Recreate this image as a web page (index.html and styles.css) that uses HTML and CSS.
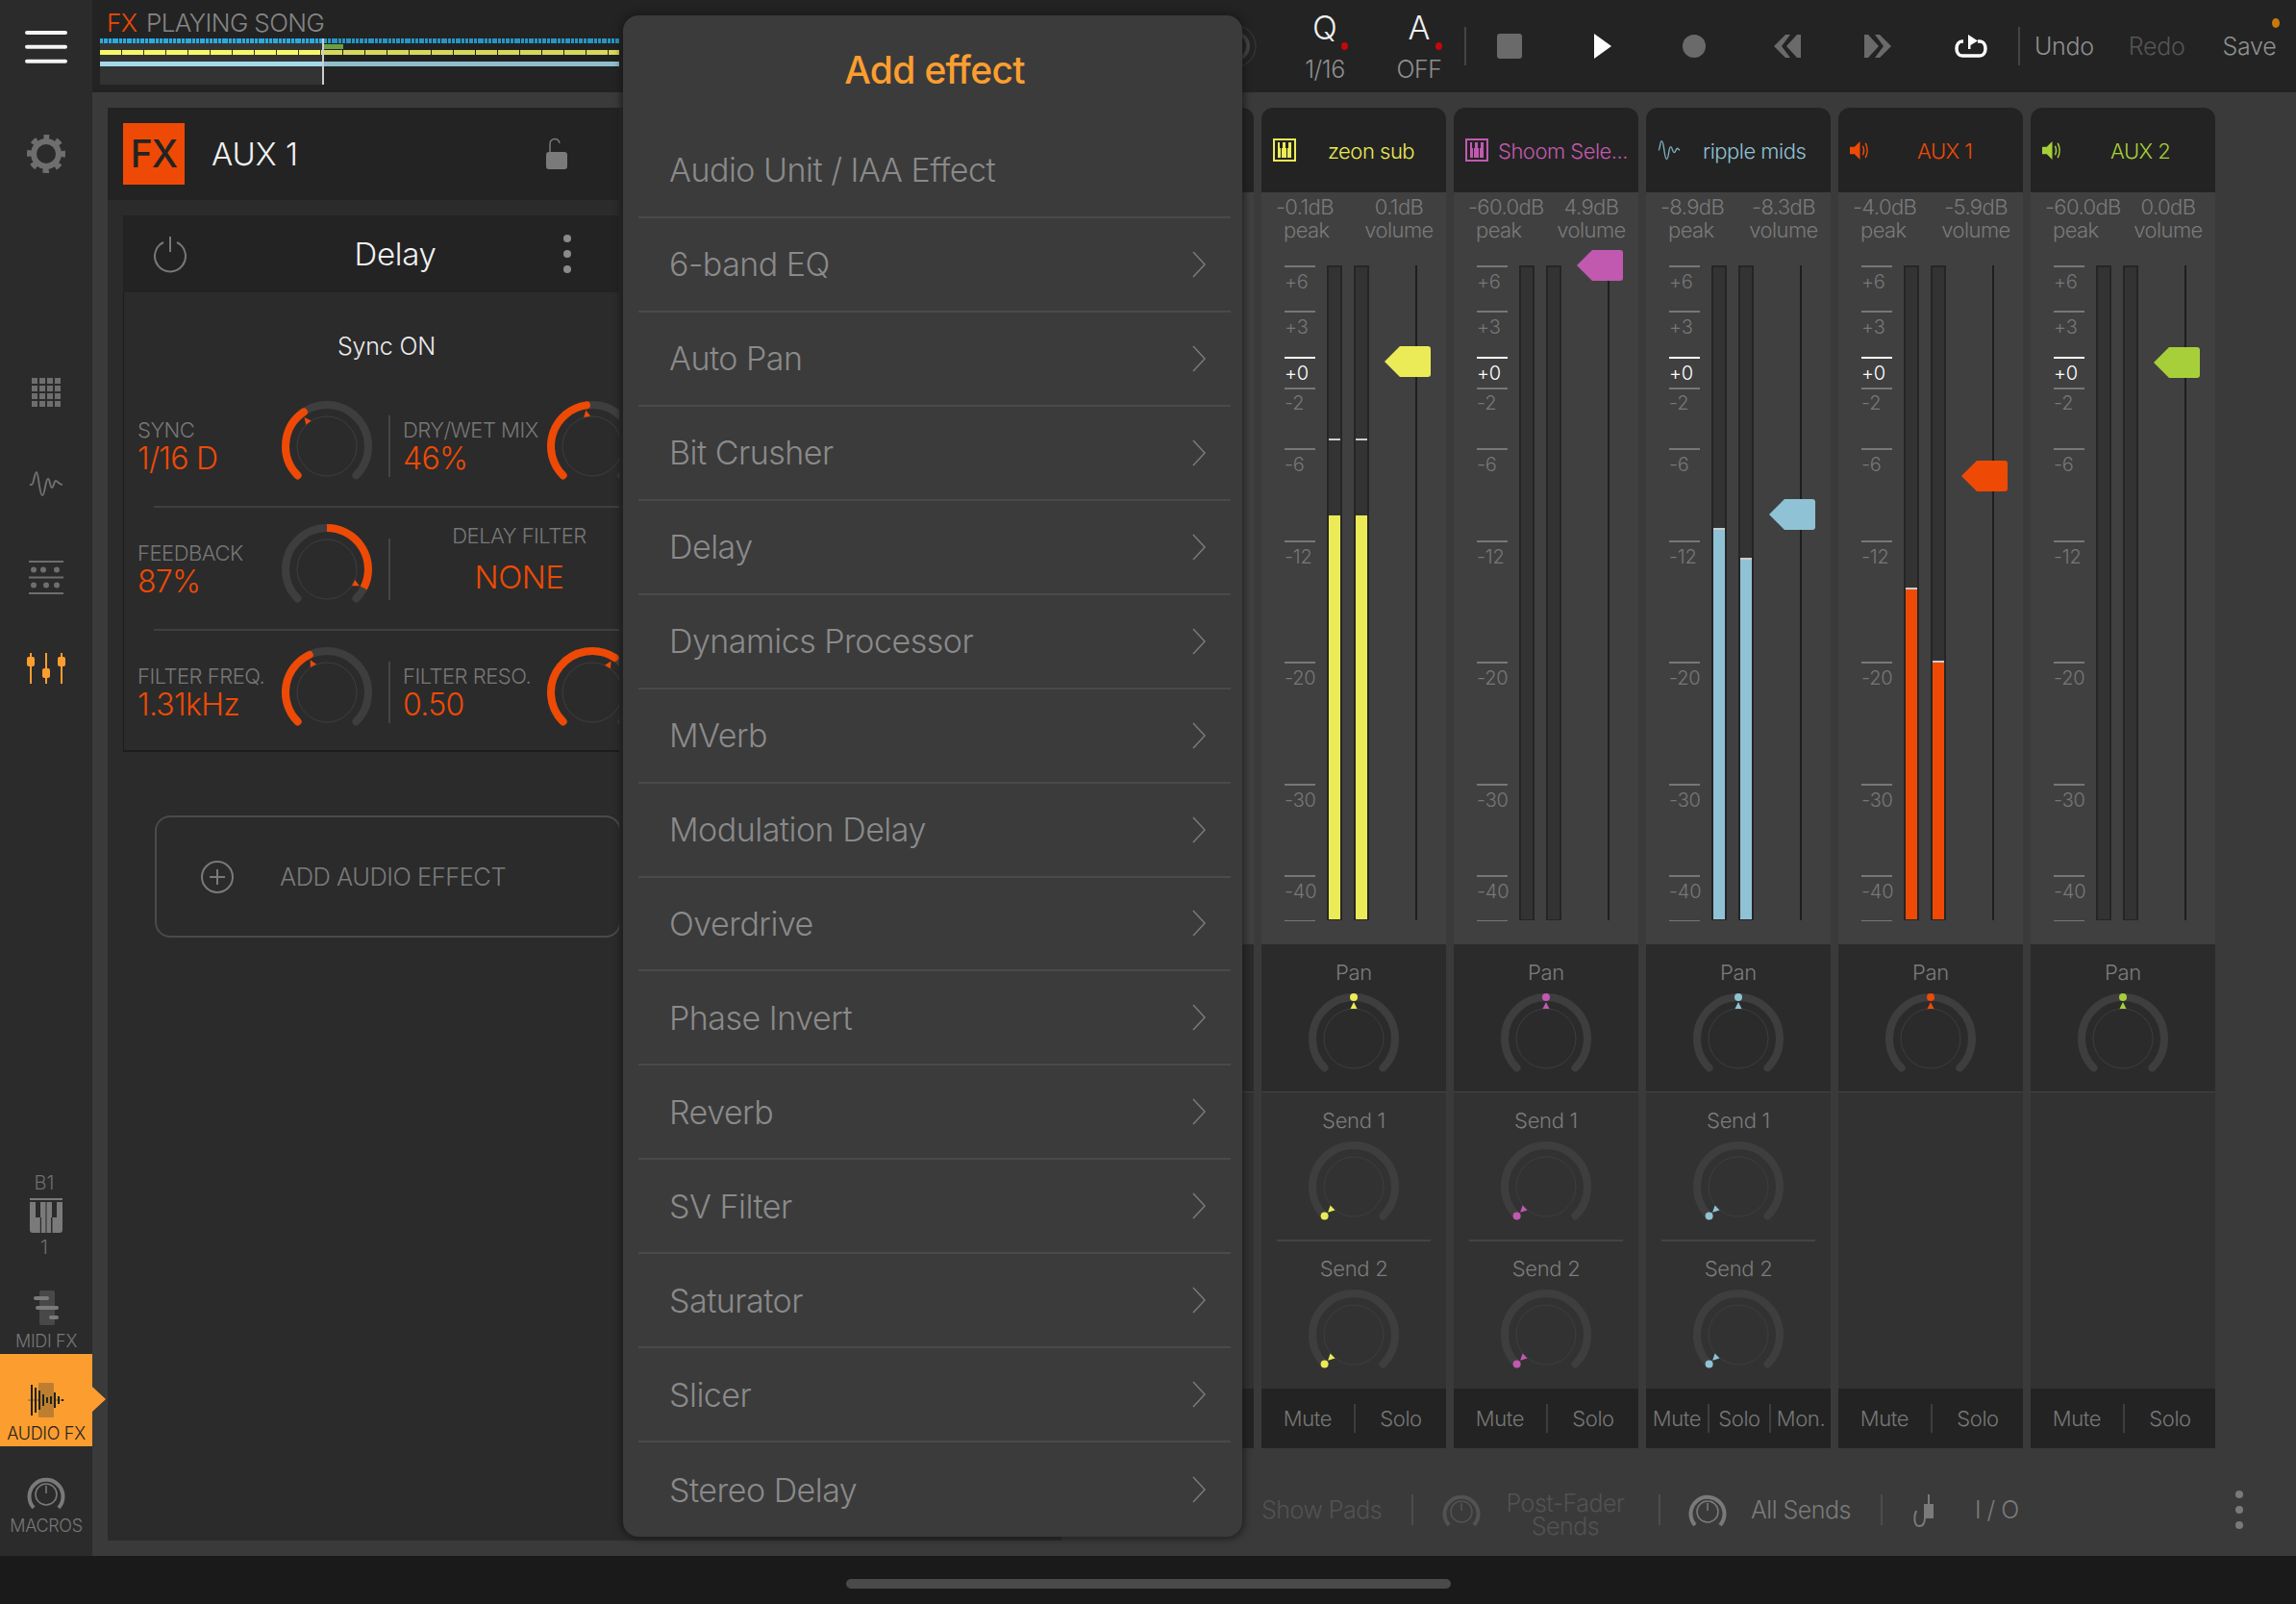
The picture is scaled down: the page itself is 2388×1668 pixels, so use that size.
FILE: index.html
```html
<!DOCTYPE html>
<html lang="en">
<head>
<meta charset="utf-8">
<title>AUX 1 - Add effect</title>
<link rel="stylesheet" href="styles.css">
</head>
<body>
<svg class="defs" aria-hidden="true">
  <symbol id="knob-base" viewBox="0 0 94 94" overflow="visible">
    <path class="knob-track" d="M16.6 77.4A43 43 0 1 1 77.4 77.4"/>
    <circle class="knob-inner" cx="47" cy="47" r="31"/>
  </symbol>
  <symbol id="ring" viewBox="0 0 38 34" overflow="visible">
    <path fill="none" stroke="currentColor" stroke-width="4" stroke-linecap="butt" d="M6 32A17.5 17.5 0 1 1 32 32"/>
    <circle cx="19" cy="18" r="11" fill="none" stroke="currentColor" stroke-width="1.6"/>
    <path stroke="currentColor" stroke-width="1.6" d="M19 9V17"/>
  </symbol>
  <symbol id="pad" viewBox="0 0 24 24">
    <rect x="1" y="1" width="22" height="22" fill="none" stroke="currentColor" stroke-width="2"/>
    <path fill="currentColor" d="M5 4H7V10H8V20H5ZM9 20V10H10V4H11V4H13V10H14V20ZM15 20V10H16V4H18V4H19V20Z"/>
  </symbol>
  <symbol id="speaker" viewBox="0 0 22 22">
    <path fill="currentColor" d="M0 7H5L11 1V21L5 15H0Z"/>
    <path fill="none" stroke="currentColor" stroke-width="1.6" d="M14 6Q16.5 11 14 16M17 3Q21 11 17 19"/>
  </symbol>
</svg>

<div class="app">
  <div class="upper">
    <nav class="sidebar">
      <div class="nav-top">
        <svg class="ic-menu" viewBox="0 0 44 36"><path d="M2 4H42M2 18.7H42M2 33.7H42"/></svg>
        <svg class="ic-gear" viewBox="0 0 40 40"><circle class="gear-ring" cx="20" cy="20" r="13"/><circle class="gear-teeth" cx="20" cy="20" r="17.5"/></svg>
        <svg class="ic-grid" viewBox="0 0 30 30"><path d="M0 0h6v6H0zM8 0h6v6H8zM16 0h6v6h-6zM24 0h6v6h-6zM0 8h6v6H0zM8 8h6v6H8zM16 8h6v6h-6zM24 8h6v6h-6zM0 16h6v6H0zM8 16h6v6H8zM16 16h6v6h-6zM24 16h6v6h-6zM0 24h6v6H0zM8 24h6v6H8zM16 24h6v6h-6zM24 24h6v6h-6z"/></svg>
        <svg class="ic-wave" viewBox="0 0 36 28"><path d="M1 15H3C5 15 6 2 8 2C10 2 11 26 14 26C17 26 17 9 20 9C22 9 22 18 24 18C26 18 26 11 28 11C30 11 31 15 35 15"/></svg>
        <svg class="ic-steps" viewBox="0 0 36 36"><path class="steps-line" d="M0 1H36M0 17.5H36M0 34H36"/><circle cx="5" cy="9.5" r="3"/><circle cx="15" cy="9.5" r="3"/><circle cx="29" cy="9.5" r="3"/><circle cx="5" cy="25.500" r="3"/><circle cx="18" cy="25.500" r="3"/><circle cx="29" cy="25.500" r="3"/></svg>
        <svg class="ic-faders" viewBox="0 0 40 32"><path class="fader-line" d="M4 0V32M20 0V32M36 0V32"/><rect x="0" y="4" width="8" height="10" rx="2"/><rect x="16" y="16" width="8" height="10" rx="2"/><rect x="32" y="4" width="8" height="10" rx="2"/></svg>
      </div>
      <div class="nav-bottom">
        <div class="nav-key">B1</div>
        <svg class="ic-piano" viewBox="0 0 34 36"><path class="piano-top" d="M0 0H34V2H0Z"/><path class="piano-keys" d="M0 4H34V33A3 3 0 0 1 31 36H3A3 3 0 0 1 0 33Z"/><path class="piano-black" d="M6 4H11V20H12V36H10.800V20H6ZM16.500 4H17.500V36H16.500ZM18 4H18ZM22 36V20H23V4H28V20H23.500V36Z"/></svg>
        <div class="nav-key nav-key-num">1</div>
        <svg class="ic-midi" viewBox="0 0 26 36"><rect class="midi-back" x="6" y="0" width="16" height="36" rx="2"/><rect class="midi-bar" x="0" y="6" width="16" height="4" rx="2"/><rect class="midi-bar" x="2" y="16" width="24" height="4" rx="2"/><rect class="midi-bar" x="16" y="26" width="10" height="4" rx="2"/></svg>
        <div class="nav-label">MIDI FX</div>
        <div class="nav-active">
          <svg class="ic-audio" viewBox="0 0 38 36"><rect class="audio-back" x="11" y="0" width="16" height="36" rx="1"/><rect class="audio-back" x="0" y="17" width="38" height="2"/><path class="audio-bars" d="M4 2V34M8 5V31M12 8V28M16 12V24M20 15V21M24 14V22M28 10V26M32 14V22M36 17V19"/></svg>
          <div class="nav-label nav-label-active">AUDIO FX</div>
        </div>
        <svg class="ic-macros"><use href="#ring"/></svg>
        <div class="nav-label">MACROS</div>
      </div>
    </nav>

    <div class="main">
      <header class="topbar">
        <div class="song">
          <div class="song-title"><span class="song-fx">FX</span> PLAYING SONG</div>
          <div class="timeline">
            <div class="tl-blue"></div>
            <div class="tl-yellow"></div>
            <div class="tl-light"></div>
            <div class="tl-green"></div>
            <div class="tl-dim"></div>
            <div class="tl-head"></div>
          </div>
        </div>
        <svg class="tempo" viewBox="0 0 48 48"><circle class="tempo-outer" cx="24" cy="24" r="22"/><circle class="tempo-inner" cx="24" cy="24" r="14"/></svg>
        <div class="toggle toggle-q"><span class="toggle-key">Q</span><i class="toggle-dot"></i><span class="toggle-val">1/16</span></div>
        <div class="toggle toggle-a"><span class="toggle-key">A</span><i class="toggle-dot"></i><span class="toggle-val">OFF</span></div>
        <i class="vbar"></i>
        <div class="transport">
          <div class="tbtn"><svg class="ic-stop" viewBox="0 0 26 26"><rect width="26" height="26" rx="3"/></svg></div>
          <div class="tbtn"><svg class="ic-play" viewBox="0 0 18 26"><path d="M0 0L18 13L0 26Z"/></svg></div>
          <div class="tbtn"><svg class="ic-rec" viewBox="0 0 24 24"><circle cx="12" cy="12" r="12"/></svg></div>
          <div class="tbtn"><svg class="ic-skip" viewBox="0 0 32 24"><path d="M15 0H20L11 12L20 24H15L3 12ZM27 0H31V24H27L16 12Z"/></svg></div>
          <div class="tbtn"><svg class="ic-skip" viewBox="0 0 32 24"><path d="M17 0H12L21 12L12 24H17L29 12ZM5 0H1V24H5L16 12Z"/></svg></div>
          <div class="tbtn"><svg class="ic-loop" viewBox="0 0 34 24"><path class="loop-line" d="M9 7H8C4.500 7 2 10 2 14.500C2 19 4.500 22 8 22H26C29.500 22 32 19 32 14.500C32 10 29.500 7 26 7H24"/><path class="loop-head" d="M14 0L24 6.500L16.500 11V15H14Z"/></svg></div>
        </div>
        <i class="vbar vbar-end"></i>
        <div class="actions">
          <span class="action">Undo</span>
          <span class="action action-off">Redo</span>
          <span class="action action-save">Save<i class="save-dot"></i></span>
        </div>
      </header>

      <div class="workspace">
        <section class="editor">
          <div class="editor-clip">
            <div class="track-head">
              <div class="fx-badge">FX</div>
              <div class="track-name">AUX 1</div>
              <svg class="ic-lock" viewBox="0 0 22 32"><path class="lock-arc" d="M4 15V6A5 5 0 0 1 14 5"/><rect y="14" width="22" height="18" rx="3"/></svg>
            </div>
            <div class="device">
              <div class="device-head">
                <svg class="ic-power" viewBox="0 0 34 36"><path d="M10 6A16 16 0 1 0 24 6M17 0V16"/></svg>
                <div class="device-name">Delay</div>
                <svg class="ic-more" viewBox="0 0 8 40"><circle cx="4" cy="4" r="4"/><circle cx="4" cy="20" r="4"/><circle cx="4" cy="36" r="4"/></svg>
              </div>
              <div class="device-body">
                <div class="sync">Sync ON</div>
                <div class="row">
                  <div class="param"><div class="param-name">SYNC</div><div class="param-val">1/16 D</div></div>
                  <svg class="knob dev-knob" viewBox="0 0 94 94"><use href="#knob-base"/><path class="knob-arc" d="M16.6 77.4A43 43 0 0 1 23 11.400"/><polygon class="knob-ptr" points="47,9 43.500,16 50.500,16" transform="rotate(-38 47 47)"/></svg>
                  <i class="row-bar"></i>
                  <div class="param"><div class="param-name">DRY/WET MIX</div><div class="param-val">46%</div></div>
                  <svg class="knob dev-knob" viewBox="0 0 94 94"><use href="#knob-base"/><path class="knob-arc" d="M16.6 77.4A43 43 0 0 1 41 4.400"/><polygon class="knob-ptr" points="47,9 43.500,16 50.500,16" transform="rotate(-10 47 47)"/></svg>
                </div>
                <div class="row-rule"></div>
                <div class="row">
                  <div class="param"><div class="param-name">FEEDBACK</div><div class="param-val">87%</div></div>
                  <svg class="knob dev-knob" viewBox="0 0 94 94"><use href="#knob-base"/><path class="knob-arc knob-arc-butt" d="M47 4A43 43 0 0 1 85.300 66.500"/><polygon class="knob-ptr" points="47,9 43.500,16 50.500,16" transform="rotate(117 47 47)"/></svg>
                  <i class="row-bar"></i>
                  <div class="param-select"><div class="param-name">DELAY FILTER</div><div class="select-val">NONE</div></div>
                </div>
                <div class="row-rule"></div>
                <div class="row">
                  <div class="param"><div class="param-name">FILTER FREQ.</div><div class="param-val">1.31kHz</div></div>
                  <svg class="knob dev-knob" viewBox="0 0 94 94"><use href="#knob-base"/><path class="knob-arc" d="M16.6 77.4A43 43 0 0 1 28.800 8"/><polygon class="knob-ptr" points="47,9 43.500,16 50.500,16" transform="rotate(-27 47 47)"/></svg>
                  <i class="row-bar"></i>
                  <div class="param"><div class="param-name">FILTER RESO.</div><div class="param-val">0.50</div></div>
                  <svg class="knob dev-knob" viewBox="0 0 94 94"><use href="#knob-base"/><path class="knob-arc" d="M16.6 77.4A43 43 0 0 1 70.400 10.900"/><polygon class="knob-ptr" points="47,9 43.500,16 50.500,16" transform="rotate(31 47 47)"/></svg>
                </div>
              </div>
            </div>
            <div class="add-box">
              <svg class="ic-plus" viewBox="0 0 34 34"><circle cx="17" cy="17" r="16"/><path d="M17 9V25M9 17H25"/></svg>
              <span class="add-text">ADD AUDIO EFFECT</span>
            </div>
          </div>
        </section>

        <section class="mixer">
          <div class="strips">
            <div class="strip strip-ghost">
              <div class="strip-head"></div>
              <div class="strip-levels"></div>
              <div class="strip-pan"></div>
              <div class="strip-sends"></div>
              <div class="strip-mutes"></div>
            </div>

            <div class="strip c-yellow">
              <div class="strip-head">
                <svg class="head-ic"><use href="#pad"/></svg>
                <span class="strip-name name-zeon">zeon sub</span>
              </div>
              <div class="strip-levels">
                <div class="readouts">
                  <div class="ro-left"><div class="ro-val">-0.1dB</div><div class="ro-lab">peak</div></div>
                  <div class="ro-right"><div>0.1dB</div><div>volume</div></div>
                </div>
                <div class="meters">
                  <div class="scale"><div class="tick">+6</div><div class="tick">+3</div><div class="tick tick-zero">+0</div><div class="tick">-2</div><div class="tick">-6</div><div class="tick">-12</div><div class="tick">-20</div><div class="tick">-30</div><div class="tick">-40</div><div class="tick tick-end"></div></div>
                  <div class="meter"><i class="peak" style="top:178px"></i><div class="fill" style="height:420px"></div></div>
                  <div class="meter"><i class="peak" style="top:178px"></i><div class="fill" style="height:420px"></div></div>
                  <i class="fader-rail"></i>
                  <svg class="handle" style="top:84px" viewBox="0 0 48 32"><path d="M0 16L16 0H45A3 3 0 0 1 48 3V29A3 3 0 0 1 45 32H16Z"/></svg>
                </div>
              </div>
              <div class="strip-pan">
                <div class="knob-label">Pan</div>
                <svg class="knob" viewBox="0 0 94 94"><use href="#knob-base"/><circle class="knob-dot" cx="47" cy="4" r="4"/><polygon class="knob-mark" points="47,9 43.500,16 50.500,16"/></svg>
              </div>
              <div class="strip-sends">
                <div class="knob-label">Send 1</div>
                <svg class="knob" viewBox="0 0 94 94"><use href="#knob-base"/><circle class="knob-dot" cx="16.600" cy="77.400" r="4"/><polygon class="knob-mark" points="47,9 43.500,16 50.500,16" transform="rotate(-135 47 47)"/></svg>
                <div class="send-rule"></div>
                <div class="knob-label">Send 2</div>
                <svg class="knob" viewBox="0 0 94 94"><use href="#knob-base"/><circle class="knob-dot" cx="16.600" cy="77.400" r="4"/><polygon class="knob-mark" points="47,9 43.500,16 50.500,16" transform="rotate(-135 47 47)"/></svg>
              </div>
              <div class="strip-mutes"><span>Mute</span><span>Solo</span></div>
            </div>

            <div class="strip c-pink">
              <div class="strip-head">
                <svg class="head-ic"><use href="#pad"/></svg>
                <span class="strip-name name-shoom">Shoom Sele...</span>
              </div>
              <div class="strip-levels">
                <div class="readouts">
                  <div class="ro-left"><div class="ro-val">-60.0dB</div><div class="ro-lab">peak</div></div>
                  <div class="ro-right"><div>4.9dB</div><div>volume</div></div>
                </div>
                <div class="meters">
                  <div class="scale"><div class="tick">+6</div><div class="tick">+3</div><div class="tick tick-zero">+0</div><div class="tick">-2</div><div class="tick">-6</div><div class="tick">-12</div><div class="tick">-20</div><div class="tick">-30</div><div class="tick">-40</div><div class="tick tick-end"></div></div>
                  <div class="meter"></div>
                  <div class="meter"></div>
                  <i class="fader-rail"></i>
                  <svg class="handle" style="top:-16px" viewBox="0 0 48 32"><path d="M0 16L16 0H45A3 3 0 0 1 48 3V29A3 3 0 0 1 45 32H16Z"/></svg>
                </div>
              </div>
              <div class="strip-pan">
                <div class="knob-label">Pan</div>
                <svg class="knob" viewBox="0 0 94 94"><use href="#knob-base"/><circle class="knob-dot" cx="47" cy="4" r="4"/><polygon class="knob-mark" points="47,9 43.500,16 50.500,16"/></svg>
              </div>
              <div class="strip-sends">
                <div class="knob-label">Send 1</div>
                <svg class="knob" viewBox="0 0 94 94"><use href="#knob-base"/><circle class="knob-dot" cx="16.600" cy="77.400" r="4"/><polygon class="knob-mark" points="47,9 43.500,16 50.500,16" transform="rotate(-135 47 47)"/></svg>
                <div class="send-rule"></div>
                <div class="knob-label">Send 2</div>
                <svg class="knob" viewBox="0 0 94 94"><use href="#knob-base"/><circle class="knob-dot" cx="16.600" cy="77.400" r="4"/><polygon class="knob-mark" points="47,9 43.500,16 50.500,16" transform="rotate(-135 47 47)"/></svg>
              </div>
              <div class="strip-mutes"><span>Mute</span><span>Solo</span></div>
            </div>

            <div class="strip c-blue">
              <div class="strip-head">
                <svg class="head-ic head-wave" viewBox="0 0 28 24"><path d="M1 12C3 12 3 1 5 1C8 1 8 23 11 23C14 23 13 8 16 8C18 8 18 15 20 15C22 15 22 10 24 10C25 10 26 12 27 12"/></svg>
                <span class="strip-name name-ripple">ripple mids</span>
              </div>
              <div class="strip-levels">
                <div class="readouts">
                  <div class="ro-left"><div class="ro-val">-8.9dB</div><div class="ro-lab">peak</div></div>
                  <div class="ro-right"><div>-8.3dB</div><div>volume</div></div>
                </div>
                <div class="meters">
                  <div class="scale"><div class="tick">+6</div><div class="tick">+3</div><div class="tick tick-zero">+0</div><div class="tick">-2</div><div class="tick">-6</div><div class="tick">-12</div><div class="tick">-20</div><div class="tick">-30</div><div class="tick">-40</div><div class="tick tick-end"></div></div>
                  <div class="meter"><div class="fill fill-top" style="height:407px"></div></div>
                  <div class="meter"><div class="fill fill-top" style="height:376px"></div></div>
                  <i class="fader-rail"></i>
                  <svg class="handle" style="top:243px" viewBox="0 0 48 32"><path d="M0 16L16 0H45A3 3 0 0 1 48 3V29A3 3 0 0 1 45 32H16Z"/></svg>
                </div>
              </div>
              <div class="strip-pan">
                <div class="knob-label">Pan</div>
                <svg class="knob" viewBox="0 0 94 94"><use href="#knob-base"/><circle class="knob-dot" cx="47" cy="4" r="4"/><polygon class="knob-mark" points="47,9 43.500,16 50.500,16"/></svg>
              </div>
              <div class="strip-sends">
                <div class="knob-label">Send 1</div>
                <svg class="knob" viewBox="0 0 94 94"><use href="#knob-base"/><circle class="knob-dot" cx="16.600" cy="77.400" r="4"/><polygon class="knob-mark" points="47,9 43.500,16 50.500,16" transform="rotate(-135 47 47)"/></svg>
                <div class="send-rule"></div>
                <div class="knob-label">Send 2</div>
                <svg class="knob" viewBox="0 0 94 94"><use href="#knob-base"/><circle class="knob-dot" cx="16.600" cy="77.400" r="4"/><polygon class="knob-mark" points="47,9 43.500,16 50.500,16" transform="rotate(-135 47 47)"/></svg>
              </div>
              <div class="strip-mutes strip-mutes-3"><span>Mute</span><span>Solo</span><span>Mon.</span></div>
            </div>

            <div class="strip c-orange">
              <div class="strip-head">
                <svg class="head-ic head-spk"><use href="#speaker"/></svg>
                <span class="strip-name name-aux1">AUX 1</span>
              </div>
              <div class="strip-levels">
                <div class="readouts">
                  <div class="ro-left"><div class="ro-val">-4.0dB</div><div class="ro-lab">peak</div></div>
                  <div class="ro-right"><div>-5.9dB</div><div>volume</div></div>
                </div>
                <div class="meters">
                  <div class="scale"><div class="tick">+6</div><div class="tick">+3</div><div class="tick tick-zero">+0</div><div class="tick">-2</div><div class="tick">-6</div><div class="tick">-12</div><div class="tick">-20</div><div class="tick">-30</div><div class="tick">-40</div><div class="tick tick-end"></div></div>
                  <div class="meter"><div class="fill fill-top" style="height:345px"></div></div>
                  <div class="meter"><div class="fill fill-top" style="height:269px"></div></div>
                  <i class="fader-rail"></i>
                  <svg class="handle" style="top:203px" viewBox="0 0 48 32"><path d="M0 16L16 0H45A3 3 0 0 1 48 3V29A3 3 0 0 1 45 32H16Z"/></svg>
                </div>
              </div>
              <div class="strip-pan">
                <div class="knob-label">Pan</div>
                <svg class="knob" viewBox="0 0 94 94"><use href="#knob-base"/><circle class="knob-dot" cx="47" cy="4" r="4"/><polygon class="knob-mark" points="47,9 43.500,16 50.500,16"/></svg>
              </div>
              <div class="strip-sends"></div>
              <div class="strip-mutes"><span>Mute</span><span>Solo</span></div>
            </div>

            <div class="strip c-green">
              <div class="strip-head">
                <svg class="head-ic head-spk"><use href="#speaker"/></svg>
                <span class="strip-name name-aux2">AUX 2</span>
              </div>
              <div class="strip-levels">
                <div class="readouts">
                  <div class="ro-left"><div class="ro-val">-60.0dB</div><div class="ro-lab">peak</div></div>
                  <div class="ro-right"><div>0.0dB</div><div>volume</div></div>
                </div>
                <div class="meters">
                  <div class="scale"><div class="tick">+6</div><div class="tick">+3</div><div class="tick tick-zero">+0</div><div class="tick">-2</div><div class="tick">-6</div><div class="tick">-12</div><div class="tick">-20</div><div class="tick">-30</div><div class="tick">-40</div><div class="tick tick-end"></div></div>
                  <div class="meter"></div>
                  <div class="meter"></div>
                  <i class="fader-rail"></i>
                  <svg class="handle" style="top:85px" viewBox="0 0 48 32"><path d="M0 16L16 0H45A3 3 0 0 1 48 3V29A3 3 0 0 1 45 32H16Z"/></svg>
                </div>
              </div>
              <div class="strip-pan">
                <div class="knob-label">Pan</div>
                <svg class="knob" viewBox="0 0 94 94"><use href="#knob-base"/><circle class="knob-dot" cx="47" cy="4" r="4"/><polygon class="knob-mark" points="47,9 43.500,16 50.500,16"/></svg>
              </div>
              <div class="strip-sends"></div>
              <div class="strip-mutes"><span>Mute</span><span>Solo</span></div>
            </div>
          </div>

          <div class="mixbar">
            <span class="mb-text mb-off mb-pads">Show Pads</span>
            <i class="mb-bar mb-bar-1"></i>
            <svg class="mb-ring mb-ring-off"><use href="#ring"/></svg>
            <span class="mb-text mb-off mb-post">Post-Fader<br>Sends</span>
            <i class="mb-bar mb-bar-2"></i>
            <svg class="mb-ring"><use href="#ring"/></svg>
            <span class="mb-text mb-sends">All Sends</span>
            <i class="mb-bar mb-bar-3"></i>
            <svg class="mb-jack" viewBox="0 0 22 34"><path class="jack-line" d="M16 0V10M3 17C0 24 1 33 6 33C11 33 12 29 12 24"/><rect x="11" y="10" width="10" height="15"/></svg>
            <span class="mb-text mb-io">I / O</span>
            <svg class="mb-more" viewBox="0 0 8 40"><circle cx="4" cy="4" r="4"/><circle cx="4" cy="20" r="4"/><circle cx="4" cy="36" r="4"/></svg>
          </div>
        </section>
      </div>
    </div>
  </div>

  <footer class="home"><i class="home-bar"></i></footer>

  <aside class="modal">
    <h2 class="modal-title">Add effect</h2>
    <ul class="fx-list">
      <li class="fx-row">Audio Unit / IAA Effect</li>
      <li class="fx-row">6-band EQ<svg class="chev" viewBox="0 0 14 26"><path d="M1 0L13 13L1 26"/></svg></li>
      <li class="fx-row">Auto Pan<svg class="chev" viewBox="0 0 14 26"><path d="M1 0L13 13L1 26"/></svg></li>
      <li class="fx-row">Bit Crusher<svg class="chev" viewBox="0 0 14 26"><path d="M1 0L13 13L1 26"/></svg></li>
      <li class="fx-row">Delay<svg class="chev" viewBox="0 0 14 26"><path d="M1 0L13 13L1 26"/></svg></li>
      <li class="fx-row">Dynamics Processor<svg class="chev" viewBox="0 0 14 26"><path d="M1 0L13 13L1 26"/></svg></li>
      <li class="fx-row">MVerb<svg class="chev" viewBox="0 0 14 26"><path d="M1 0L13 13L1 26"/></svg></li>
      <li class="fx-row">Modulation Delay<svg class="chev" viewBox="0 0 14 26"><path d="M1 0L13 13L1 26"/></svg></li>
      <li class="fx-row">Overdrive<svg class="chev" viewBox="0 0 14 26"><path d="M1 0L13 13L1 26"/></svg></li>
      <li class="fx-row">Phase Invert<svg class="chev" viewBox="0 0 14 26"><path d="M1 0L13 13L1 26"/></svg></li>
      <li class="fx-row">Reverb<svg class="chev" viewBox="0 0 14 26"><path d="M1 0L13 13L1 26"/></svg></li>
      <li class="fx-row">SV Filter<svg class="chev" viewBox="0 0 14 26"><path d="M1 0L13 13L1 26"/></svg></li>
      <li class="fx-row">Saturator<svg class="chev" viewBox="0 0 14 26"><path d="M1 0L13 13L1 26"/></svg></li>
      <li class="fx-row">Slicer<svg class="chev" viewBox="0 0 14 26"><path d="M1 0L13 13L1 26"/></svg></li>
      <li class="fx-row">Stereo Delay<svg class="chev" viewBox="0 0 14 26"><path d="M1 0L13 13L1 26"/></svg></li>
    </ul>
  </aside>
</div>
</body>
</html>
```
FILE: styles.css
```css
* { box-sizing: border-box; }
html, body { margin: 0; padding: 0; background: #1a1a1a; }
body { font-family: Inter, "Liberation Sans", sans-serif; font-weight: 300; color: #808080; }
i { display: block; font-style: normal; }
svg { display: block; overflow: visible; }
.defs { position: absolute; width: 0; height: 0; }

.app { position: relative; width: 2388px; height: 1668px; overflow: hidden; display: flex; flex-direction: column; }
.upper { display: flex; height: 1618px; }

/* sidebar */
.sidebar { width: 96px; flex: none; background: #2b2b2b; display: flex; flex-direction: column; justify-content: space-between; align-items: center; }
.nav-top, .nav-bottom { display: flex; flex-direction: column; align-items: center; width: 100%; }
.ic-menu { width: 44px; height: 36px; margin-top: 30px; }
.ic-menu path { fill: none; stroke: #f4f4f4; stroke-width: 4px; stroke-linecap: round; }
.ic-gear { width: 40px; height: 40px; margin-top: 74px; }
.gear-ring { fill: none; stroke: #6e6e6e; stroke-width: 6px; }
.gear-teeth { fill: none; stroke: #6e6e6e; stroke-width: 5px; stroke-dasharray: 6.500 7.240; stroke-dashoffset: 3.250; transform: rotate(-90deg); transform-origin: 20px 20px; }
.ic-grid { width: 30px; height: 30px; margin-top: 213px; fill: #6e6e6e; }
.ic-wave { width: 36px; height: 28px; margin-top: 66px; fill: none; stroke: #6e6e6e; stroke-width: 2px; }
.ic-steps { width: 36px; height: 36px; margin-top: 66px; fill: #6e6e6e; }
.steps-line { stroke: #6e6e6e; stroke-width: 2px; fill: none; }
.ic-faders { width: 40px; height: 32px; margin-top: 60px; fill: #fb9e2f; }
.fader-line { stroke: #fb9e2f; stroke-width: 2px; fill: none; }
.nav-key { font-size: 20px; line-height: 24px; color: #6e6e6e; margin-left: -4px; }
.ic-piano { width: 34px; height: 36px; margin-top: 4px; }
.piano-top, .piano-keys { fill: #7a7a7a; }
.piano-black { fill: #2b2b2b; }
.nav-key-num { margin-top: 3px; font-size: 20px; }
.ic-midi { width: 26px; height: 36px; margin-top: 33px; }
.midi-back { fill: #484848; }
.midi-bar { fill: #7a7a7a; }
.nav-label { font-size: 18px; line-height: 20px; color: #777; white-space: nowrap; letter-spacing: -0.3px; }
.ic-midi + .nav-label { margin-top: 7px; height: 23px; }
.nav-active { position: relative; width: 96px; height: 96px; background: #fb9e2f; display: flex; flex-direction: column; align-items: center; padding-top: 30px; }
.nav-active::after { content: ""; position: absolute; left: 96px; top: 34px; border-left: 14px solid #fb9e2f; border-top: 13px solid transparent; border-bottom: 13px solid transparent; }
.ic-audio { width: 38px; height: 36px; }
.audio-back { fill: #bd7f2f; }
.audio-bars { stroke: #222; stroke-width: 2px; fill: none; }
.nav-label-active { color: #222; margin-top: 7px; }
.ic-macros { width: 38px; height: 34px; margin-top: 32px; color: #7a7a7a; }
.ic-macros + .nav-label { margin-top: 7px; margin-bottom: 21px; }

/* top bar */
.main { width: 2292px; display: flex; flex-direction: column; }
.topbar { height: 96px; background: #232323; display: flex; align-items: flex-start; }
.song { width: 540px; margin-left: 8px; flex: none; }
.song-title { height: 40px; padding: 9px 0 0 7px; font-size: 26px; line-height: 30px; color: #858585; letter-spacing: -0.6px; white-space: nowrap; }
.song-fx { color: #ee4a05; margin-right: 3px; }
.timeline { position: relative; width: 540px; height: 48px; overflow: hidden; background: linear-gradient(90deg, #333 232px, transparent 232px); }
.tl-blue { height: 5px; background: repeating-linear-gradient(90deg, #29abe2 0 3px, transparent 3px 4px, #29abe2 4px 8px, transparent 8px 9px, #29abe2 9px 12px, transparent 12px 13px, #29abe2 13px 19px, transparent 19px 20px, #29abe2 20px 23px, transparent 23px 24px, #29abe2 24px 27px, transparent 27px 28px, #29abe2 28px 33px, transparent 33px 34px, #29abe2 34px 37px, transparent 37px 38px); }
.tl-yellow { height: 5px; margin-top: 7px; background: repeating-linear-gradient(90deg, #f7f76b 0 22px, transparent 22px 23px); }
.tl-light { height: 5px; margin-top: 7px; background: #a4d9e9; }
.tl-green { position: absolute; left: 232px; top: 6px; width: 21px; height: 5px; background: #7ab648; }
.tl-dim { position: absolute; left: 232px; top: 0; right: 0; height: 29px; background: rgba(20, 20, 20, 0.14); }
.tl-head { position: absolute; left: 231px; top: 0; width: 2px; height: 48px; background: #ccc; }

.tempo { width: 48px; height: 48px; margin: 24px 0 0 616px; flex: none; }
.tempo-outer { fill: none; stroke: #333; stroke-width: 1.500px; }
.tempo-inner { fill: none; stroke: #444; stroke-width: 4px; }
.toggle { position: relative; width: 80px; flex: none; display: flex; flex-direction: column; align-items: center; padding-top: 11px; }
.toggle-q { margin-left: 30px; }
.toggle-a { margin-left: 18px; }
.toggle-key { font-size: 34px; line-height: 36px; color: #f0f0f0; }
.toggle-val { font-size: 25px; line-height: 30px; color: #8f8f8f; margin-top: 10px; letter-spacing: -0.5px; }
.toggle-dot { position: absolute; left: 57px; top: 44px; width: 7px; height: 8px; border-radius: 50%; background: #c4070b; }
.vbar { width: 2px; height: 40px; margin: 28px 0 0 7px; background: #444; flex: none; }
.transport { display: flex; margin-left: -3px; flex: none; }
.tbtn { width: 96px; height: 96px; display: flex; align-items: center; justify-content: center; }
.ic-stop { width: 26px; height: 26px; fill: #6a6a6a; }
.ic-play { width: 18px; height: 26px; fill: #fff; margin-left: 2px; }
.ic-rec { width: 24px; height: 24px; fill: #6a6a6a; }
.ic-skip { width: 32px; height: 24px; fill: #6a6a6a; }
.ic-loop { width: 34px; height: 24px; }
.loop-line { fill: none; stroke: #fff; stroke-width: 3.500px; }
.loop-head { fill: #fff; }
.vbar-end { margin-left: 1px; }
.actions { display: flex; margin-left: 15px; height: 96px; align-items: center; flex: none; }
.action { font-size: 25px; line-height: 32px; color: #8f8f8f; margin-right: 36px; letter-spacing: -0.3px; }
.action-off { color: #555; }
.action-save { position: relative; margin-right: 0; margin-left: 3px; }
.save-dot { position: absolute; right: -4px; top: -13px; width: 8px; height: 10px; border-radius: 50%; background: #c8790c; }

/* workspace */
.workspace { height: 1522px; background: #3a3a3a; padding: 16px 0 0 16px; display: flex; gap: 8px; }
.editor { width: 992px; height: 1490px; flex: none; background: #2b2b2b; }
.editor-clip { width: 532px; height: 100%; overflow: hidden; }
.track-head { height: 96px; background: #232323; display: flex; align-items: center; padding-left: 16px; }
.fx-badge { width: 64px; height: 64px; background: #ee4a05; color: #232323; font-size: 39px; font-weight: 500; line-height: 64px; text-align: center; letter-spacing: -1px; }
.track-name { font-size: 33px; color: #f2f2f2; margin-left: 28px; line-height: 40px; }
.ic-lock { width: 22px; height: 32px; margin-left: 258px; fill: #7a7a7a; }
.lock-arc { fill: none; stroke: #7a7a7a; stroke-width: 1.500px; }

.device { margin: 16px 0 0 16px; width: 540px; }
.device-head { height: 80px; background: #232323; display: flex; align-items: center; padding-left: 32px; }
.ic-power { width: 34px; height: 36px; flex: none; }
.ic-power path { fill: none; stroke: #777; stroke-width: 2px; }
.device-name { width: 386px; margin-left: 0; text-align: center; font-size: 33px; line-height: 40px; color: #f2f2f2; letter-spacing: -0.3px; margin-left: 24px; }
.ic-more { width: 8px; height: 40px; flex: none; margin-left: -46px; position: relative; left: 28px; fill: #8a8a8a; }
.device-body { height: 478px; border-left: 1px solid #1c1c1c; border-bottom: 2px solid #1c1c1c; padding-left: 14px; }
.sync { height: 96px; width: 548px; padding: 36px 0 0 0; font-size: 25px; line-height: 40px; margin-left: -14px; text-align: center; color: #ececec; width: 548px; padding-right: 0; letter-spacing: -0.2px; }
.sync { width: 546px; }
.row { display: flex; height: 126px; align-items: flex-start; }
.row-rule { height: 2px; margin-left: 17px; background: #3f3f3f; width: 600px; }
.param { width: 150px; flex: none; padding-top: 33px; }
.param-name { font-size: 22px; line-height: 28px; color: #777; white-space: nowrap; letter-spacing: -0.5px; }
.param-val { font-size: 32px; line-height: 34px; color: #ee4a05; white-space: nowrap; letter-spacing: -0.7px; margin-top: -1px; }
.dev-knob { margin-top: 17px; color: #ee4a05; flex: none; }
.knob { width: 94px; height: 94px; }
.knob-track { fill: none; stroke: #3e3e3e; stroke-width: 8px; stroke-linecap: round; }
.knob-inner { fill: none; stroke: #3e3e3e; stroke-width: 1px; }
.knob-arc { fill: none; stroke: #ee4a05; stroke-width: 8px; stroke-linecap: round; }
.knob-arc-butt { stroke-linecap: butt; }
.knob-ptr { fill: #ee4a05; }
.knob-dot, .knob-mark { fill: currentColor; }
.row-bar { width: 2px; height: 64px; margin: 32px 13px 0 17px; background: #464646; flex: none; }
.param-select { width: 242px; text-align: center; flex: none; padding-top: 15px; }
.select-val { font-size: 33px; line-height: 40px; color: #ee4a05; margin-top: 9px; letter-spacing: -0.5px; }

.add-box { margin: 66px 0 0 49px; width: 485px; height: 127px; border: 2px solid #4a4a4a; border-radius: 16px; display: flex; align-items: center; padding-left: 46px; }
.ic-plus { width: 34px; height: 34px; flex: none; }
.ic-plus circle, .ic-plus path { fill: none; stroke: #7a7a7a; stroke-width: 2px; }
.add-text { font-size: 25.500px; color: #7a7a7a; margin-left: 48px; letter-spacing: -0.5px; white-space: nowrap; }

/* mixer */
.mixer { width: 1200px; flex: none; }
.strips { display: flex; gap: 8px; height: 1394px; }
.strip { width: 192px; flex: none; display: flex; flex-direction: column; }
.c-yellow { color: #ebeb57; }
.c-pink { color: #c259b0; }
.c-blue { color: #90c2d6; }
.c-orange { color: #ee4a05; }
.c-green { color: #a7cf3a; }
.strip-head { height: 88px; background: #232323; border-radius: 12px 12px 0 0; position: relative; display: flex; align-items: center; }
.head-ic { position: absolute; left: 12px; top: 32px; width: 24px; height: 24px; }
.head-wave { left: 12px; fill: none; stroke: currentColor; stroke-width: 1.600px; opacity: .9; }
.head-spk { top: 34px; width: 21px; height: 21px; }
.strip-name { font-size: 22px; line-height: 28px; white-space: nowrap; position: absolute; top: 31px; letter-spacing: -0.5px; }
.name-zeon { left: 69px; }
.name-shoom { left: 46px; }
.name-ripple { left: 59px; }
.name-aux1 { left: 82px; }
.name-aux2 { left: 83px; }
.strip-levels { height: 782px; background: #404040; }
.readouts { height: 76px; padding-top: 3px; display: flex; color: #7a7a7a; font-size: 22px; line-height: 24px; letter-spacing: -0.6px; }
.ro-left { width: 96px; padding-left: 15px; white-space: nowrap; }
.ro-val { width: 96px; }
.ro-lab { padding-left: 8px; }
.ro-right { width: 94px; text-align: center; white-space: nowrap; }
.meters { position: relative; display: flex; align-items: flex-start; height: 690px; padding-left: 24px; }
.scale { width: 32px; flex: none; }
.tick { border-top: 2px solid #777; font-size: 20px; line-height: 28px; color: #777; height: 47px; padding-top: 1px; letter-spacing: -0.2px; white-space: nowrap; }
.tick:nth-child(2) { height: 47.500px; }
.tick:nth-child(3) { height: 32px; color: #fff; border-color: #fff; }
.tick:nth-child(4) { height: 63.500px; padding-top: 0; }
.tick:nth-child(5) { height: 95.500px; }
.tick:nth-child(6) { height: 126px; }
.tick:nth-child(7) { height: 127px; }
.tick:nth-child(8) { height: 95px; }
.tick:nth-child(9) { height: 47.500px; }
.tick-end { height: 1px; border-top-width: 1px; }
.meter { position: relative; width: 16px; height: 681px; margin-left: 12px; flex: none; background: #333; border: 2px solid #252525; border-bottom-width: 1px; display: flex; flex-direction: column; justify-content: flex-end; }
.fill { background: currentColor; }
.fill-top { border-top: 2px solid #ccc; }
.peak { position: absolute; left: 0; right: 0; height: 2px; background: #ccc; }
.fader-rail { width: 2px; height: 681px; margin-left: 48px; background: #1e1e1e; flex: none; }
.handle { position: absolute; left: 128px; width: 48px; height: 32px; fill: currentColor; }
.strip-pan { height: 153px; background: #2b2b2b; display: flex; flex-direction: column; align-items: center; padding-top: 17px; }
.knob-label { font-size: 22px; line-height: 24px; color: #7c7c7c; margin-bottom: 10px; letter-spacing: -0.3px; }
.strip-sends { height: 309px; background: #323232; border-top: 1px solid #444; display: flex; flex-direction: column; align-items: center; padding-top: 17px; }
.send-rule { width: 160px; height: 2px; background: #444; margin: 8px 0 16px; }
.strip-mutes { height: 62px; background: #232323; display: grid; grid-template-columns: 96px 96px; align-items: center; text-align: center; color: #777; font-size: 22px; letter-spacing: -0.4px; }
.strip-mutes span { line-height: 30px; }
.strip-mutes span + span { border-left: 2px solid #3e3e3e; }
.strip-mutes-3 { grid-template-columns: 64px 64px 64px; }
.strip-ghost .strip-head { border-radius: 12px 12px 0 0; }

.mixbar { height: 112px; padding-left: 200px; display: flex; align-items: flex-start; padding-top: 48px; }
.mb-text { font-size: 25px; line-height: 32px; letter-spacing: -0.5px; white-space: nowrap; color: #7a7a7a; }
.mb-off { color: #525252; }
.mb-pads { width: 156px; flex: none; }
.mb-bar { width: 2px; height: 32px; background: #4d4d4d; flex: none; }
.mb-ring { width: 38px; height: 34px; flex: none; color: #7a7a7a; }
.mb-ring-off { color: #525252; margin: 0 26px 0 31px; }
.mb-post { width: 126px; text-align: center; line-height: 24px; margin: -3px 34px 0 0; flex: none; }
.mb-bar-2 + .mb-ring { margin-left: 30px; }
.mb-sends { width: 102px; margin: 0 33px 0 26px; flex: none; }
.mb-jack { width: 22px; height: 34px; margin-left: 32px; flex: none; fill: #7a7a7a; }
.jack-line { fill: none; stroke: #7a7a7a; stroke-width: 2px; }
.mb-io { margin-left: 42px; flex: none; }
.mb-more { width: 8px; height: 40px; margin: -4px 0 0 225px; fill: #7a7a7a; flex: none; }

/* home */
.home { height: 50px; background: #1a1a1a; padding: 24px 0 0 880px; }
.home-bar { width: 629px; height: 10px; border-radius: 5px; background: #4a4a4a; }

/* modal */
.modal { position: absolute; left: 648px; top: 16px; width: 644px; height: 1582px; background: #3b3b3b; border-radius: 16px; box-shadow: 0 0 6px 3px rgba(22, 22, 22, 0.6); padding: 0 12px 0 16px; }
.modal-title { margin: 0; height: 113px; padding-top: 32px; font-size: 39px; line-height: 50px; font-weight: 500; color: #fb9e2f; text-align: center; letter-spacing: -0.7px; }
.fx-list { list-style: none; margin: 0; padding: 0; }
.fx-row { height: 97.950px; border-bottom: 2px solid #4a4a4a; display: flex; align-items: center; justify-content: space-between; padding: 0 26px 0 32px; font-size: 34px; color: #8a8a8a; letter-spacing: -0.5px; }
.fx-row:last-child { border-bottom: 0; }
.chev { width: 14px; height: 26px; flex: none; }
.chev path { fill: none; stroke: #7a7a7a; stroke-width: 1.500px; }
```
